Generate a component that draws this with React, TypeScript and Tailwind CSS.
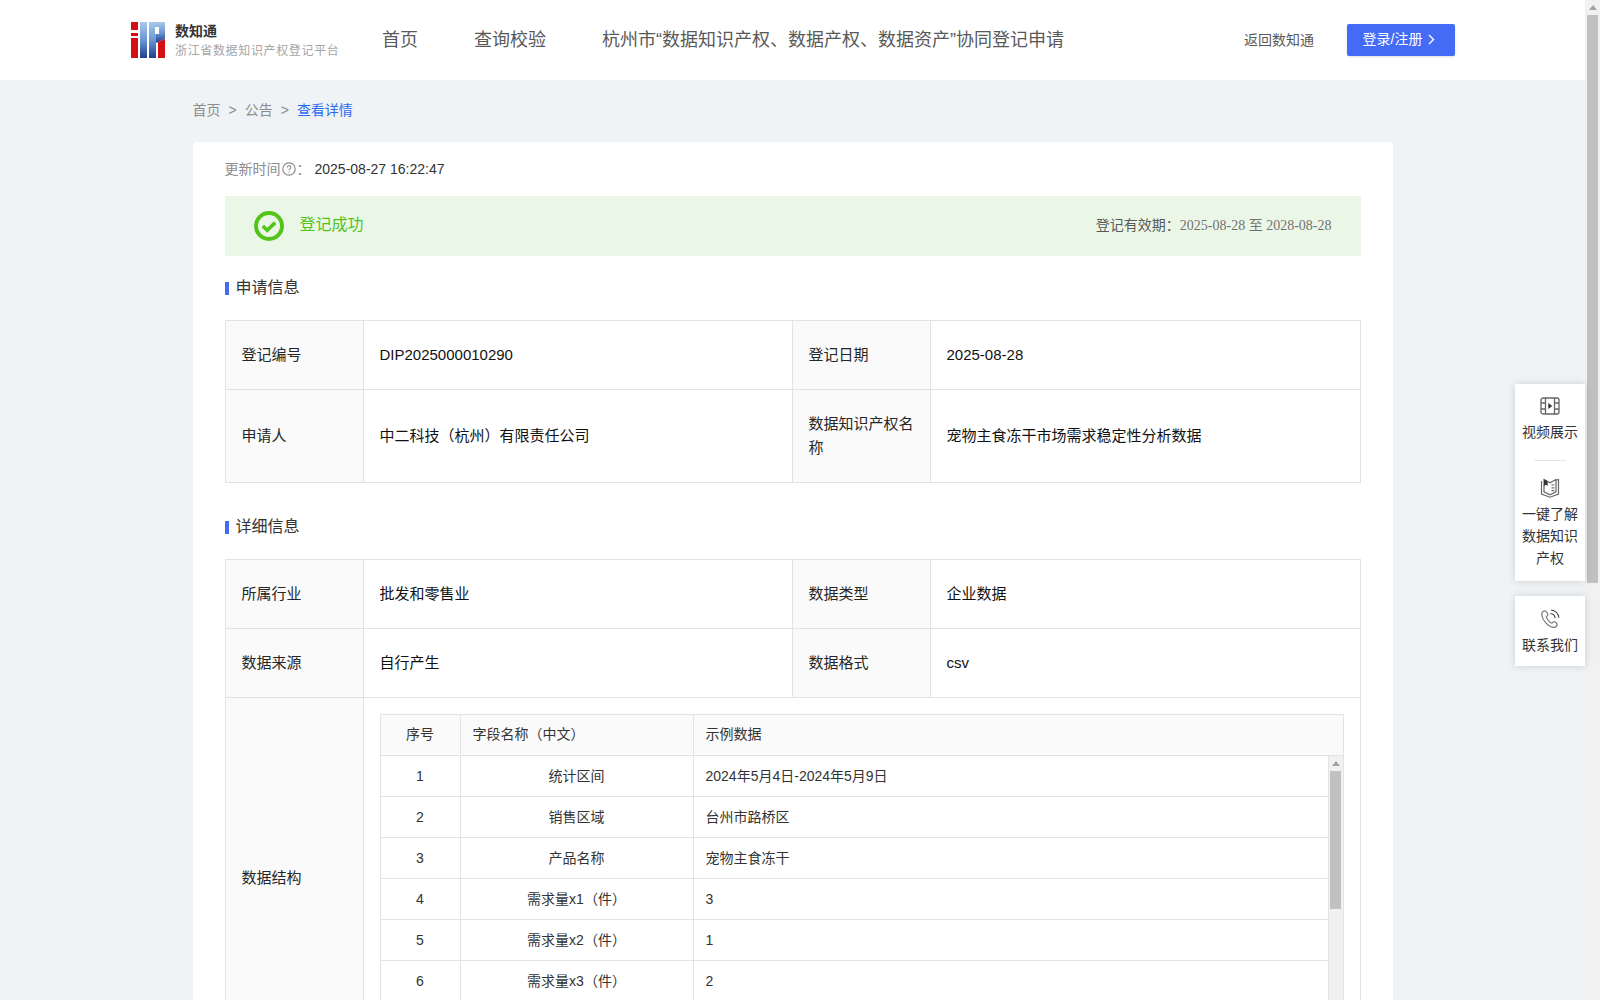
import React from "react";

const cn = "font-['Liberation_Sans','Noto_Sans_CJK_SC',sans-serif]";

const Logo = () => (
  <svg width="34" height="36" viewBox="0 0 34 36" className="shrink-0">
    <defs>
      <linearGradient id="logoBlue" x1="0" y1="0" x2="0" y2="1">
        <stop offset="0%" stopColor="#a9c8ec" />
        <stop offset="50%" stopColor="#6a97d2" />
        <stop offset="100%" stopColor="#1f3f8f" />
      </linearGradient>
    </defs>
    <rect x="0" y="0" width="7" height="8" fill="#d40f14" />
    <rect x="0" y="11" width="7" height="3" fill="#d40f14" />
    <rect x="0" y="16" width="7" height="20" fill="#d40f14" />
    <rect x="9" y="0" width="7" height="36" fill="url(#logoBlue)" />
    <rect x="18" y="0" width="7" height="36" fill="url(#logoBlue)" />
    <path d="M25 0h9v17l-9 4z" fill="url(#logoBlue)" />
    <rect x="24" y="5" width="4" height="7" fill="#fff" />
    <path d="M27 20l7-3v19h-7z" fill="#d40f14" />
  </svg>
);

const HelpIcon = () => (
  <svg width="14" height="14" viewBox="0 0 14 14" fill="none" className="mx-[1px]">
    <circle cx="7" cy="7" r="6.200" stroke="#8c8c8c" strokeWidth="1.2" />
    <path d="M5.2 5.5a1.800 1.800 0 1 1 2.700 1.500c-.6.300-.9.600-.9 1.200" stroke="#8c8c8c" strokeWidth="1.100" />
    <circle cx="7" cy="10.100" r=".7" fill="#8c8c8c" />
  </svg>
);

const SuccessIcon = () => (
  <svg width="30" height="30" viewBox="0 0 30 30" fill="none" className="shrink-0">
    <circle cx="15" cy="15" r="13" stroke="#52c41a" strokeWidth="4" />
    <path d="M8.800 15l4.400 4.200 8-7.600" stroke="#52c41a" strokeWidth="3.600" />
  </svg>
);

const VideoIcon = () => (
  <svg width="20" height="20" viewBox="0 0 20 20" fill="none" stroke="#666" strokeWidth="1.3">
    <rect x="1" y="2" width="18" height="16" rx="2" />
    <path d="M5.500 2v16M14.500 2v16M1 7h4.500M1 13h4.500M14.500 7H19M14.500 13H19" />
    <path d="M8.300 7l4 3-4 3z" fill="#333" stroke="none" />
  </svg>
);

const BookIcon = () => (
  <svg width="20" height="20" viewBox="0 0 20 20" fill="none" stroke="#666" strokeWidth="1.2">
    <path d="M1.500 3v13l8.500 3.200 8.500-3.200V1.500l-2.500.8" />
    <path d="M4 1.500l6 3.200 6-3.200v12.300l-6 3-6-3z" />
    <path d="M4 1.500v6.500l1.800-1.300L7.600 8V3.300z" fill="#333" stroke="none" />
    <path d="M11.500 7h2.800M11.500 9.800h2.800M11.500 12.600h2.800" />
  </svg>
);

const PhoneIcon = () => (
  <svg width="20" height="20" viewBox="0 0 20 20" fill="none" stroke="#777" strokeWidth="1.200">
    <path d="M5 1.800C3 2 1.600 3.600 1.800 6c.4 5 6.500 12 11.500 12.300 2 .1 3.600-1.200 3.900-3 .1-.7-2.700-3-3.400-2.800-.8.200-1.200 1.500-2 1.600-1.600.2-5.600-4.600-5.300-6.200.1-.8 1.300-1.300 1.400-2.100C8 5 6 1.700 5 1.800z" />
    <path d="M10.500 4.500c2.500.3 4.400 2.200 4.700 4.800" stroke="#444" />
    <path d="M11 1c4.200.4 7.400 3.600 7.800 7.800" stroke="#444" />
  </svg>
);

const Section = ({ title, top }: { title: string; top: string }) => (
  <div className={`flex items-center ${top}`}>
    <span className="mt-[2px] h-[13px] w-[4px] bg-[#436bf5]" />
    <span className="ml-[7px] pt-[1px] text-[16px] leading-[24px] text-[#333]">{title}</span>
  </div>
);

const Label = ({ children, h }: { children: React.ReactNode; h: string }) => (
  <div className={`flex items-center border-r border-b border-[#e3e3e3] bg-[#fafafa] px-4 text-[15px] leading-[24px] text-[#262626] ${h}`}>
    <div>{children}</div>
  </div>
);

const Value = ({ children, h, last }: { children: React.ReactNode; h: string; last?: boolean }) => (
  <div className={`flex items-center border-b border-[#e3e3e3] px-4 text-[15px] leading-[24px] text-[#111] ${last ? "" : "border-r"} ${h}`}>
    {children}
  </div>
);

const fieldRows = [
  ["1", "统计区间", "2024年5月4日-2024年5月9日"],
  ["2", "销售区域", "台州市路桥区"],
  ["3", "产品名称", "宠物主食冻干"],
  ["4", "需求量x1（件）", "3"],
  ["5", "需求量x2（件）", "1"],
  ["6", "需求量x3（件）", "2"],
];

const FloatItem = ({ icon, lines }: { icon: React.ReactNode; lines: string[] }) => (
  <div className="flex flex-col items-center">
    {icon}
    <div className="mt-[5px] text-center text-[14px] leading-[22px] text-[#333]">
      {lines.map((l) => (
        <div key={l}>{l}</div>
      ))}
    </div>
  </div>
);

export default function App() {
  return (
    <div className={`flex h-screen overflow-hidden bg-[#eff3f6] ${cn}`}>
      <div className="relative min-w-0 flex-1">
        {/* header */}
        <header className="flex h-20 items-center bg-white pl-[131px] pr-[130px]">
          <Logo />
          <div className="ml-[10px] w-[167px]">
            <div className="text-[14px] font-bold leading-[20px] text-[#333]">数知通</div>
            <div className="whitespace-nowrap pt-[1px] text-[12px] leading-[18px] tracking-[0.65px] text-[#a6a6a6]">
              浙江省数据知识产权登记平台
            </div>
          </div>
          <nav className="ml-[40px] flex gap-[56px] text-[18px] text-[#595959]">
            <span>首页</span>
            <span>查询校验</span>
            <span>杭州市“数据知识产权、数据产权、数据资产”协同登记申请</span>
          </nav>
          <span className="ml-auto text-[14px] text-[#595959]">返回数知通</span>
          <button className="ml-[33px] flex h-8 w-[108px] items-center justify-center gap-[6px] rounded-[2px] bg-[#436bf5] pb-[1px] pr-[4px] text-[14px] text-white shadow-sm">
            登录/注册
            <svg width="7" height="11" viewBox="0 0 7 11" fill="none" stroke="#fff" strokeWidth="1.400">
              <path d="M1 1l4.500 4.500L1 10" />
            </svg>
          </button>
        </header>

        <div className="mx-auto w-[1200px]">
          {/* breadcrumb */}
          <div className="flex h-[62px] items-center gap-[8px] pb-[1px] text-[14px] text-[#8c8c8c]">
            <span>首页</span>
            <span>&gt;</span>
            <span>公告</span>
            <span>&gt;</span>
            <span className="text-[#2e6bf5]">查看详情</span>
          </div>

          <main className="rounded-[4px] bg-white px-8 pb-10">
            <div className="flex h-[54px] items-center text-[14px]">
              <span className="text-[#8c8c8c]">更新时间</span>
              <HelpIcon />
              <span className="text-[#8c8c8c]">：</span>
              <span className="ml-[4px] text-[#333]">2025-08-27 16:22:47</span>
            </div>

            <div className="flex h-[60px] items-center bg-[#ebf7e6] pl-[29px] pr-[29px]">
              <SuccessIcon />
              <span className="ml-[16px] pb-[2px] text-[16px] text-[#52c41a]">登记成功</span>
              <span className="ml-auto pb-[2px] text-[14px] text-[#595959]">
                登记有效期：
                <span className="font-['Liberation_Serif','Noto_Sans_CJK_SC',serif] text-[#737373]">2025-08-28 至 2028-08-28</span>
              </span>
            </div>

            <Section title="申请信息" top="mt-[19px]" />

            <div className="mt-[20px] grid grid-cols-[138px_429px_138px_1fr] border-t border-l border-r border-[#e3e3e3]">
              <Label h="h-[69px] pb-[1px]">登记编号</Label>
              <Value h="h-[69px] pb-[1px]">DIP2025000010290</Value>
              <Label h="h-[69px] pb-[1px]">登记日期</Label>
              <Value h="h-[69px] pb-[1px]" last>2025-08-28</Value>
              <Label h="h-[93px] pb-[1px]">申请人</Label>
              <Value h="h-[93px] pb-[1px]">中二科技（杭州）有限责任公司</Value>
              <Label h="h-[93px] pb-[1px]">数据知识产权名称</Label>
              <Value h="h-[93px] pb-[1px]" last>宠物主食冻干市场需求稳定性分析数据</Value>
            </div>

            <Section title="详细信息" top="mt-[31px]" />

            <div className="mt-[20px] grid grid-cols-[138px_429px_138px_1fr] border-t border-l border-r border-[#e3e3e3]">
              <Label h="h-[69px] pb-[1px]">所属行业</Label>
              <Value h="h-[69px] pb-[1px]">批发和零售业</Value>
              <Label h="h-[69px] pb-[1px]">数据类型</Label>
              <Value h="h-[69px] pb-[1px]" last>企业数据</Value>
              <Label h="h-[69px] pb-[1px]">数据来源</Label>
              <Value h="h-[69px] pb-[1px]">自行产生</Value>
              <Label h="h-[69px] pb-[1px]">数据格式</Label>
              <Value h="h-[69px] pb-[1px]" last>csv</Value>
            </div>

            <div className="grid grid-cols-[138px_1fr] border-l border-r border-b border-[#e3e3e3]">
              <Label h="h-[361px]">数据结构</Label>
              <div className="px-4 py-4">
                <div className="border border-[#e3e3e3] text-[14px] text-[#333]">
                  <div className="grid h-[41px] grid-cols-[80px_233px_1fr] items-center border-b border-[#e3e3e3] bg-[#fafafa] pb-[1px]">
                    <div className="flex h-full items-center justify-center border-r border-[#e3e3e3]">序号</div>
                    <div className="flex h-full items-center border-r border-[#e3e3e3] pl-3">字段名称（中文）</div>
                    <div className="pl-3">示例数据</div>
                  </div>
                  <div className="flex">
                    <div className="min-w-0 flex-1">
                      {fieldRows.map(([no, name, sample]) => (
                        <div key={no} className="grid h-[41px] grid-cols-[80px_233px_1fr] items-center border-b border-[#e3e3e3]">
                          <div className="flex h-full items-center justify-center border-r border-[#e3e3e3]">{no}</div>
                          <div className="flex h-full items-center justify-center border-r border-[#e3e3e3]">{name}</div>
                          <div className="pl-3">{sample}</div>
                        </div>
                      ))}
                    </div>
                    <div className="flex w-[15px] flex-col items-center border-l border-[#e3e3e3] bg-[#f1f1f1]">
                      <div className="mt-[5px] border-x-[4px] border-b-[5px] border-x-transparent border-b-[#a3a3a3]" />
                      <div className="mt-[5px] h-[138px] w-[11px] bg-[#c1c1c1]" />
                    </div>
                  </div>
                </div>
              </div>
            </div>
          </main>
        </div>

        {/* floating tools */}
        <aside className="absolute right-0 top-[384px] flex w-[70px] flex-col gap-[15px]">
          <div className="flex h-[197px] flex-col items-center bg-white pt-[12px] shadow-[0_0_8px_rgba(0,0,0,0.15)]">
            <FloatItem icon={<VideoIcon />} lines={["视频展示"]} />
            <div className="mb-[17px] mt-[17px] h-px w-8 bg-[#e5e5e5]" />
            <FloatItem icon={<BookIcon />} lines={["一键了解", "数据知识", "产权"]} />
          </div>
          <div className="flex h-[70px] flex-col items-center bg-white pt-[13px] shadow-[0_0_8px_rgba(0,0,0,0.15)]">
            <FloatItem icon={<PhoneIcon />} lines={["联系我们"]} />
          </div>
        </aside>
      </div>

      {/* page scrollbar */}
      <div className="flex w-[15px] shrink-0 flex-col items-center bg-[#f1f1f1]">
        <div className="mt-[5px] border-x-[4px] border-b-[5px] border-x-transparent border-b-[#a3a3a3]" />
        <div className="mt-[5px] h-[568px] w-[11px] bg-[#c1c1c1]" />
      </div>
    </div>
  );
}
